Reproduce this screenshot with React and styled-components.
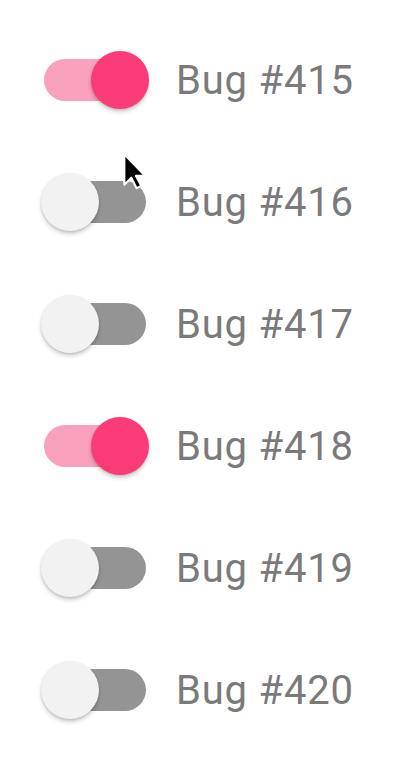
import React, { useState } from "react";
import styled, { createGlobalStyle } from "styled-components";

const GlobalStyle = createGlobalStyle`
  html, body {
    margin: 0;
    padding: 0;
    background: #ffffff;
    font-family: Roboto, "Liberation Sans", sans-serif;
  }
`;

const bugs = [
  { id: 415, on: true },
  { id: 416, on: false },
  { id: 417, on: false },
  { id: 418, on: true },
  { id: 419, on: false },
  { id: 420, on: false },
];

const App = () => {
  const [list, setList] = useState(bugs);

  const toggle = (id) => {
    setList(list.map((b) => (b.id === id ? { ...b, on: !b.on } : b)));
  };

  return (
    <Page>
      <GlobalStyle />
      {list.map((bug) => (
        <Row key={bug.id} onClick={() => toggle(bug.id)}>
          <Switch>
            <Track $on={bug.on} />
            <Thumb $on={bug.on} />
          </Switch>
          <Label>Bug #{bug.id}</Label>
        </Row>
      ))}
      <Cursor width="28" height="42" viewBox="0 0 24 36">
        <path
          d="M2 2 L2 28 L8 22 L12.5 31 L16.5 29 L12 20.5 L20 20.5 Z"
          fill="#000"
          stroke="#fff"
          strokeWidth="1.8"
          strokeLinejoin="round"
        />
      </Cursor>
    </Page>
  );
};

const Page = styled.div`
  position: relative;
  width: 400px;
  height: 778px;
  padding-top: 19px;
  box-sizing: border-box;
  background: #fff;
`;

const Row = styled.div`
  height: 122px;
  display: flex;
  align-items: center;
  padding-left: 41px;
  cursor: pointer;
`;

const Switch = styled.div`
  position: relative;
  width: 108px;
  height: 58px;
  flex-shrink: 0;
`;

const Track = styled.div`
  position: absolute;
  left: 3px;
  top: 8px;
  width: 102px;
  height: 42px;
  border-radius: 21px;
  background: ${(p) => (p.$on ? "#f9a0bd" : "#949494")};
`;

const Thumb = styled.div`
  position: absolute;
  top: 0;
  left: ${(p) => (p.$on ? "50px" : "0px")};
  width: 58px;
  height: 58px;
  border-radius: 50%;
  background: ${(p) => (p.$on ? "#fb3a78" : "#f2f2f2")};
  box-shadow: 0 3px 4px rgba(0, 0, 0, 0.18), 0 1px 2px rgba(0, 0, 0, 0.12);
`;

const Label = styled.span`
  margin-left: 27px;
  font-size: 40px;
  color: #7a7a7a;
  letter-spacing: 0.8px;
`;

const Cursor = styled.svg`
  position: absolute;
  left: 122px;
  top: 152px;
`;

export default App;
